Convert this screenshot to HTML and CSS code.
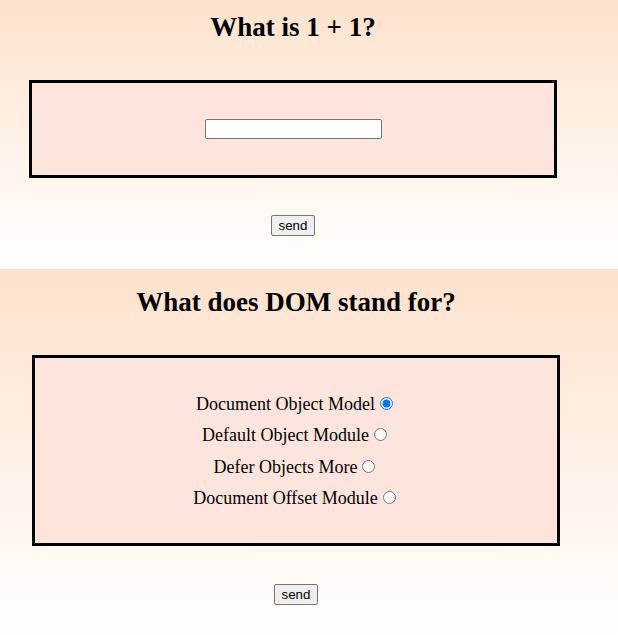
FILE: index.html
```html
<!DOCTYPE html>
<html>
<head>
<meta charset="utf-8">
<link rel="stylesheet" href="styles.css">
</head>
<body>
<section class="quiz quiz-one">
  <h2 class="question">What is 1 + 1?</h2>
  <div class="answer-box answer-text">
    <input class="text-input" type="text">
  </div>
  <div class="actions"><button class="send">send</button></div>
</section>
<section class="quiz quiz-two">
  <h2 class="question">What does DOM stand for?</h2>
  <div class="answer-box answer-options">
    <div class="option">Document Object Model<input class="radio" type="radio" name="dom" checked></div>
    <div class="option">Default Object Module<input class="radio" type="radio" name="dom"></div>
    <div class="option">Defer Objects More<input class="radio" type="radio" name="dom"></div>
    <div class="option">Document Offset Module<input class="radio" type="radio" name="dom"></div>
  </div>
  <div class="actions"><button class="send">send</button></div>
</section>
</body>
</html>
```
FILE: styles.css
```css
html, body {
  margin: 0;
  padding: 0;
  background: #ffffff;
}
body {
  font-family: "Liberation Serif", "Times New Roman", serif;
  font-size: 18px;
  color: #000;
}
.quiz {
  background: linear-gradient(#fde2cd, #ffffff);
  text-align: center;
}
.quiz-one {
  padding: 12px 32px 33px 0;
  height: 269px;
  box-sizing: border-box;
}
.quiz-two {
  padding: 18px 26px 40px 0;
}
.question {
  margin: 0;
  font-size: 27px;
  line-height: 31px;
  font-weight: bold;
}
.answer-box {
  background: #fde5dd;
  border: 3px solid #000;
  margin-top: 37px;
}
.quiz-one .answer-box {
  margin-left: 29px;
  margin-right: 29px;
  padding: 36px 0;
  display: flex;
  justify-content: center;
}
.quiz-two .answer-box {
  margin-left: 32px;
  margin-right: 32px;
  padding: 30.5px 0 28.5px;
}
.text-input {
  display: block;
  width: 177px;
  height: 20px;
  box-sizing: border-box;
  margin: 0;
  border: 1px solid #767676;
  border-radius: 2px;
  background: #fff;
  padding: 1px 2px;
  font: 13.33px "Liberation Sans", Arial, sans-serif;
}
.option {
  line-height: 31.5px;
}
.radio {
  width: 13px;
  height: 13px;
  margin: 3px 3px 0 5px;
  vertical-align: baseline;
}
.actions {
  margin-top: 37px;
  display: flex;
  justify-content: center;
}
.quiz-two .actions {
  margin-top: 38px;
}
.send {
  font: 13.33px "Liberation Sans", Arial, sans-serif;
  height: 21px;
  padding: 1px 7px;
  border: 1px solid #767676;
  border-radius: 2px;
  background: #efefef;
  color: #000;
  margin: 0;
}
```
